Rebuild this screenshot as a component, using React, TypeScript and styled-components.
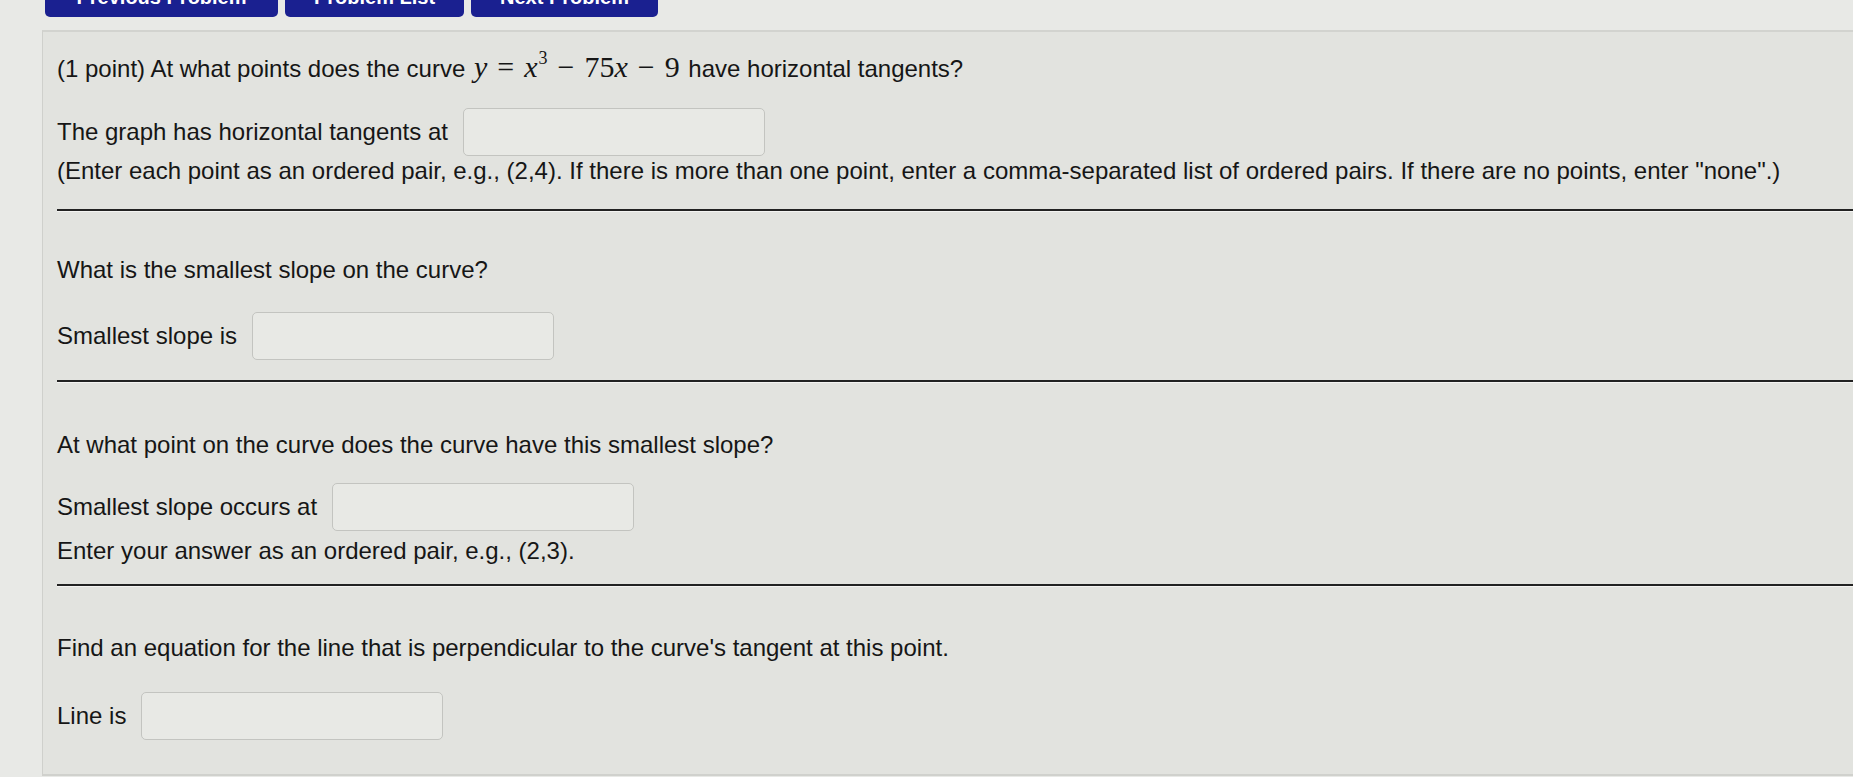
import styled, { createGlobalStyle } from "styled-components";

const GlobalStyle = createGlobalStyle`
  html, body {
    margin: 0;
    padding: 0;
    background: #e8e9e6;
  }
  body {
    font-family: "Liberation Sans", Arial, Helvetica, sans-serif;
    color: #161616;
  }
`;

type SectionProps = { $top: number; $bottom: number; $divider?: boolean };

const App = () => {
  return (
    <Page>
      <GlobalStyle />
      <ButtonBar>
        <NavButton $width={233}>Previous Problem</NavButton>
        <NavButton $width={179}>Problem List</NavButton>
        <NavButton $width={187}>Next Problem</NavButton>
      </ButtonBar>
      <Panel>
        <Section $top={22} $bottom={25} $divider>
          <Question>
            (1 point) At what points does the curve{" "}
            <Math>
              <Var>y</Var>
              <Op>=</Op>
              <Var>x</Var>
              <Sup>3</Sup>
              <Op>−</Op>
              75<Var>x</Var>
              <Op>−</Op>9
            </Math>{" "}
            have horizontal tangents?
          </Question>
          <AnswerRow $gap={26}>
            <Label>The graph has horizontal tangents at</Label>
            <AnswerBox type="text" />
          </AnswerRow>
          <Hint $gap={2}>
            (Enter each point as an ordered pair, e.g., (2,4). If there is more than one point, enter a
            comma-separated list of ordered pairs. If there are no points, enter "none".)
          </Hint>
        </Section>

        <Section $top={46} $bottom={20} $divider>
          <Question>What is the smallest slope on the curve?</Question>
          <AnswerRow $gap={29}>
            <Label>Smallest slope is</Label>
            <AnswerBox type="text" />
          </AnswerRow>
        </Section>

        <Section $top={50} $bottom={20} $divider>
          <Question>At what point on the curve does the curve have this smallest slope?</Question>
          <AnswerRow $gap={25}>
            <Label>Smallest slope occurs at</Label>
            <AnswerBox type="text" />
          </AnswerRow>
          <Hint $gap={7}>Enter your answer as an ordered pair, e.g., (2,3).</Hint>
        </Section>

        <Section $top={49} $bottom={0}>
          <Question>Find an equation for the line that is perpendicular to the curve's tangent at this point.</Question>
          <AnswerRow $gap={31}>
            <Label>Line is</Label>
            <AnswerBox type="text" />
          </AnswerRow>
        </Section>
      </Panel>
    </Page>
  );
};

const Page = styled.div`
  height: 777px;
  overflow: hidden;
  padding-left: 42px;
  box-sizing: border-box;
`;

const ButtonBar = styled.div`
  display: flex;
  align-items: flex-end;
  gap: 7px;
  height: 17px;
  margin-left: 3px;
  overflow: hidden;
`;

const NavButton = styled.div<{ $width: number }>`
  flex: none;
  display: flex;
  align-items: center;
  justify-content: center;
  width: ${({ $width }) => $width}px;
  height: 40px;
  border-radius: 5px;
  background: #1a2090;
  color: #ffffff;
  font-size: 20px;
  font-weight: 700;
`;

const Panel = styled.div`
  margin-top: 13px;
  padding: 0 0 34px 14px;
  background: #e2e3df;
  border-top: 2px solid #d2d3cf;
  border-left: 1px solid #cfd0cc;
  border-bottom: 2px solid #d0d1cd;
`;

const Section = styled.div<SectionProps>`
  padding-top: ${({ $top }) => $top}px;
  padding-bottom: ${({ $bottom }) => $bottom}px;
  border-bottom: ${({ $divider }) => ($divider ? "2px solid #222222" : "none")};
  box-shadow: ${({ $divider }) => ($divider ? "0 1px 0 #f4f4f2" : "none")};
`;

const Question = styled.p`
  margin: 0;
  font-size: 24px;
  line-height: 26px;
  white-space: nowrap;
`;

const Math = styled.span`
  font-family: "Liberation Serif", "Times New Roman", serif;
  font-size: 30px;
  margin: 0 2px;
`;

const Var = styled.i`
  font-style: italic;
`;

const Sup = styled.sup`
  font-size: 0.6em;
  line-height: 0;
  vertical-align: 0.75em;
  margin-left: 1px;
`;

const Op = styled.span`
  margin: 0 10px;
`;

const AnswerRow = styled.div<{ $gap: number }>`
  display: flex;
  align-items: center;
  gap: 15px;
  margin-top: ${({ $gap }) => $gap}px;
`;

const Label = styled.span`
  font-size: 24px;
  line-height: 26px;
  white-space: nowrap;
`;

const AnswerBox = styled.input`
  flex: none;
  width: 302px;
  height: 48px;
  box-sizing: border-box;
  border: 1.5px solid #c3c4c0;
  border-radius: 5px;
  background: #e8e9e5;
  outline: none;
`;

const Hint = styled.p<{ $gap: number }>`
  margin: ${({ $gap }) => $gap}px 0 0;
  font-size: 24px;
  line-height: 26px;
  white-space: nowrap;
`;

export default App;
